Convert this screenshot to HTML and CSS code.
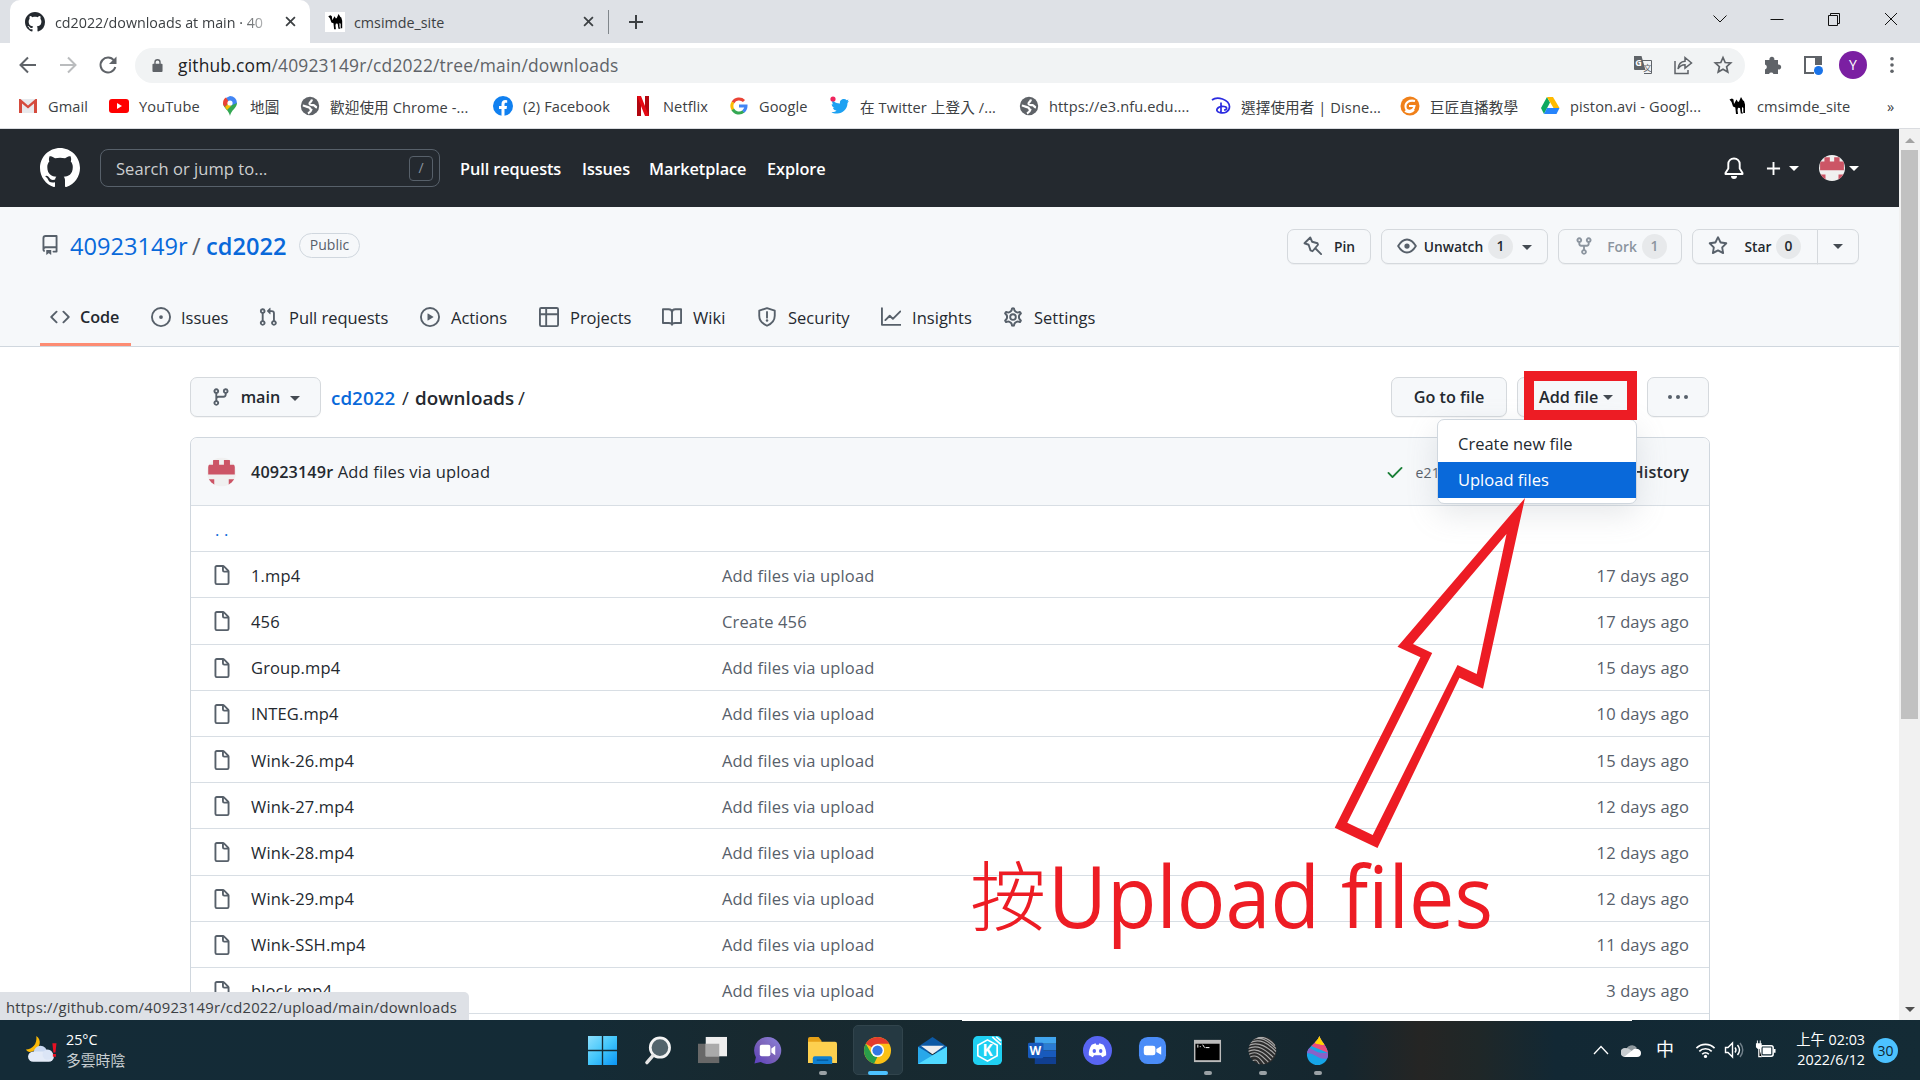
FILE: index.html
```html
<!DOCTYPE html>
<html lang="zh-Hant">
<head>
<meta charset="utf-8">
<title>cd2022/downloads at main · 40923149r/cd2022</title>
<link rel="stylesheet" href="styles.css">
</head>
<body>
<svg class="defs" aria-hidden="true">
  <symbol id="i-github" viewBox="0 0 16 16"><path d="M8 0C3.58 0 0 3.58 0 8c0 3.54 2.29 6.53 5.47 7.59.4.07.55-.17.55-.38 0-.19-.01-.82-.01-1.49-2.01.37-2.53-.49-2.69-.94-.09-.23-.48-.94-.82-1.13-.28-.15-.68-.52-.01-.53.63-.01 1.08.58 1.23.82.72 1.21 1.87.87 2.33.66.07-.52.28-.87.51-1.07-1.78-.2-3.64-.89-3.64-3.95 0-.87.31-1.59.82-2.15-.08-.2-.36-1.02.08-2.12 0 0 .67-.21 2.2.82.64-.18 1.32-.27 2-.27.68 0 1.36.09 2 .27 1.53-1.04 2.2-.82 2.2-.82.44 1.1.16 1.92.08 2.12.51.56.82 1.27.82 2.15 0 3.07-1.87 3.75-3.65 3.95.29.25.54.73.54 1.48 0 1.07-.01 1.93-.01 2.2 0 .21.15.46.55.38A8.013 8.013 0 0016 8c0-4.42-3.58-8-8-8z"/></symbol>
  <symbol id="i-file" viewBox="0 0 16 16"><path fill-rule="evenodd" d="M3.750 1.500a.25.25 0 00-.25.25v12.500c0 .138.112.25.25.25h8.500a.25.25 0 00.25-.25V6H9.750A1.750 1.750 0 018 4.250V1.500H3.750zm5.750.560v2.190c0 .138.112.25.25.25h2.190L9.500 2.060zM2 1.750C2 .784 2.784 0 3.750 0h5.086c.464 0 .909.184 1.237.513l3.414 3.414c.329.328.513.773.513 1.237v9.086A1.750 1.750 0 0112.250 16h-8.500A1.750 1.750 0 012 14.250V1.750z"/></symbol>
  <symbol id="i-camel" viewBox="0 0 20 20"><path d="M2.500 3.500L5 2.500l1.500 1L7 8l2.500-4.500L11 6l1-.5 2-4.500 2 3.500 1 .5 1 3.500v8.500h-1.700v-5l-1.300-1v4.500l1 2h-2.200l-.8-5.500-2-.3-.5 2.300.5 4H9l-.7-6.500L6 10.500 4.500 6z"/></symbol>
  <symbol id="i-globe" viewBox="0 0 20 20"><circle cx="10" cy="10" r="9.200" fill="#5f6368"/><path fill="none" stroke="#fff" stroke-width="2.200" d="M2.800 9.500c2 .3 3.500 1.500 6 1.800 1.500.2 1 2 2.500 2.500-.3 1.700-1.500 2.700-3.300 3.600M17 11.500c-1.500-.3-2-2-3.500-2.300-1.800-.3-3.500.3-4-1.200-.4-1.500 2-2 2.500-4.500"/></symbol>
  <symbol id="i-avatar" viewBox="0 0 24 24"><clipPath id="round"><circle cx="12" cy="12" r="12"/></clipPath><g clip-path="url(#round)"><path fill="#f0f0f0" d="M0 0h24v24H0z"/><path fill="#cc5566" d="M1 6h4V2h5v4h4V2h5v4h4v8H1zM1 18h5v6H1zM18 18h5v6h-5z"/></g></symbol>
</svg>

<header class="tabstrip">
  <div class="tab tab-active">
    <svg class="ic20 dark"><use href="#i-github"/></svg>
    <span class="tab-title fade">cd2022/downloads at main · 40</span>
    <svg class="x" viewBox="0 0 10 10"><path d="M1 1l8 8M9 1l-8 8"/></svg>
  </div>
  <div class="tab tab-idle">
    <span class="favicon"><svg class="ic18"><use href="#i-camel"/></svg></span>
    <span class="tab-title">cmsimde_site</span>
    <svg class="x" viewBox="0 0 10 10"><path d="M1 1l8 8M9 1l-8 8"/></svg>
  </div>
  <svg class="newtab" viewBox="0 0 16 16"><path d="M8 1v14M1 8h14"/></svg>
  <div class="window-controls">
    <svg viewBox="0 0 16 16"><path d="M1.500 4.500L8 11l6.500-6.500"/></svg>
    <svg viewBox="0 0 16 16"><path d="M1.500 8.500h13"/></svg>
    <svg viewBox="0 0 16 16"><path d="M2.500 4.500h9v10h-9zM4.500 4V2.500h9v10H12"/></svg>
    <svg viewBox="0 0 16 16"><path d="M2 2l12 12M14 2L2 14"/></svg>
  </div>
</header>

<div class="toolbar">
  <div class="nav-buttons">
    <svg viewBox="0 0 20 20"><path d="M18 10H3M10 2.500L2.500 10l7.500 7.500"/></svg>
    <svg class="off" viewBox="0 0 20 20"><path d="M2 10h15M10 2.500l7.500 7.500-7.500 7.500"/></svg>
    <svg viewBox="0 0 20 20"><path d="M16 5.500A7.500 7.500 0 1 0 17.300 12"/><path class="solid" d="M18.500 1.500V9H11z"/></svg>
  </div>
  <div class="omnibox">
    <svg class="lock" viewBox="0 0 12 16"><path fill-rule="evenodd" d="M1.500 6H2.500V4.500a3.500 3.500 0 0 1 7 0V6h1a1 1 0 0 1 1 1v7a1 1 0 0 1-1 1h-9a1 1 0 0 1-1-1V7a1 1 0 0 1 1-1zM4 6h4V4.500a2 2 0 0 0-4 0z"/></svg>
    <span class="url"><b>github.com</b>/40923149r/cd2022/tree/main/downloads</span>
    <div class="omni-actions">
      <svg viewBox="0 0 20 20"><path fill="none" stroke="#5f6368" d="M8 5.500h10.500v13H11"/><path d="M1 1h7.500l4 14H1.500L1 14z"/><text x="2.300" y="11" font-size="9" fill="#fff" font-weight="700">G</text><text x="10.200" y="16" font-size="8.500" fill="#5f6368">文</text></svg>
      <svg viewBox="0 0 20 20"><path fill="none" stroke="#5f6368" stroke-width="1.500" d="M2 6v12.500h13V15M5 14c.5-5 3-7.500 7-7.700V2.500L18.500 8 12 13.200v-3.500c-3 0-5.500 1.500-7 4.300z"/></svg>
      <svg viewBox="0 0 20 20"><path fill="none" stroke="#5f6368" stroke-width="1.700" d="M10 2.500l2.200 5 5.500.5-4.100 3.700 1.200 5.400L10 14.300l-4.800 2.800 1.200-5.400L2.300 8l5.500-.5z"/></svg>
    </div>
  </div>
  <div class="ext">
    <svg viewBox="0 0 20 20"><path d="M2 5h4.500a2.500 2.500 0 1 1 4.800 0H15v4.500a2.500 2.500 0 1 1 0 4.800V19h-4.500a2.500 2.500 0 0 0-4.500 0H2v-4.500a2.600 2.600 0 0 0 0-5z"/></svg>
    <svg viewBox="0 0 20 20"><path fill="none" stroke="#5f6368" stroke-width="2" d="M18 10V2H2v16h9"/><path d="M12 2h6v8h-6z"/><circle cx="15.500" cy="15.500" r="4.500" fill="#1a73e8"/></svg>
    <span class="profile">Y</span>
    <svg class="dots" viewBox="0 0 6 20"><circle cx="3" cy="3" r="2"/><circle cx="3" cy="10" r="2"/><circle cx="3" cy="17" r="2"/></svg>
  </div>
</div>

<nav class="bookmarks">
  <a><svg viewBox="0 0 20 20"><path fill="#e8eaed" d="M1 3h18v14H1z"/><path fill="#d54b3d" d="M1 17V3h1.500L10 9.500 17.500 3H19v14h-3V7.500l-6 5-6-5V17z"/></svg>Gmail</a>
  <a><svg viewBox="0 0 20 20"><rect y="3" width="20" height="14" rx="3" fill="#f00"/><path fill="#fff" d="M8 7l5 3-5 3z"/></svg>YouTube</a>
  <a><svg viewBox="0 0 20 20"><path fill="#34a853" d="M10 20C9 14 3 12 3 7h14c0 5-6 7-7 13z"/><path fill="#4285f4" d="M10 0a7 7 0 0 1 7 7l-7 3L6 2z"/><path fill="#ea4335" d="M3 7c0-3 1.500-4.500 3-5.500L9 6 5 11C4 10 3 9 3 7z"/><path fill="#fbbc04" d="M5 11l4-4 2 3-4 4z"/><circle cx="10" cy="7" r="2.600" fill="#fff"/></svg><span class="cjk">地圖</span></a>
  <a><svg><use href="#i-globe"/></svg>歡迎使用 Chrome -...</a>
  <a><svg viewBox="0 0 20 20"><circle cx="10" cy="10" r="10" fill="#1080f0"/><path fill="#fff" d="M8.500 20v-7H6v-3h2.500V8c0-2.600 1.500-4 3.800-4l1.900.2v2.500H13c-1.200 0-1.500.7-1.500 1.500V10H14l-.4 3h-2.100v7z"/></svg>(2) Facebook</a>
  <a><svg viewBox="0 0 20 20"><path fill="#b1060f" d="M4 0h4v20H4zM12 0h4v20h-4z"/><path fill="#e50914" d="M4 0h4l8 20h-4z"/></svg>Netflix</a>
  <a><svg viewBox="0 0 20 20" fill="none" stroke-width="3"><path stroke="#ea4335" d="M4 6.500A7 7 0 0 1 15 5"/><path stroke="#fbbc05" d="M4 6.300a7 7 0 0 0 0 7.400"/><path stroke="#34a853" d="M3.800 13.500A7 7 0 0 0 14.500 15.400"/><path stroke="#4285f4" d="M10 10h7a7 7 0 0 1-2.800 5.600"/></svg>Google</a>
  <a><svg viewBox="0 0 20 20"><path fill="#1da1f2" d="M1.500 16c2 .2 4-.3 5-1.500-2 0-3-1-3.500-2.500h1.500C3 11.500 1.700 10 1.700 8l1.600.5C2 7 2 5.500 2.500 4c2 2.500 4.500 3.500 7.500 3.500-.5-3 1.500-4.500 4-4.500 1 0 2 .4 2.700 1.200L18.500 3.500 17.500 5.500l1.500-.5L17.500 7C17.500 13.500 12 18 6.500 17.500c-2 0-4-.5-5-1.500z"/><circle cx="3" cy="3" r="2.600" fill="#f0245c"/></svg>在 Twitter 上登入 /...</a>
  <a><svg><use href="#i-globe"/></svg>https://e3.nfu.edu....</a>
  <a><svg viewBox="0 0 20 20" fill="none" stroke="#2b2be0" stroke-width="1.700"><path d="M1 4c5-4 17-1 17.500 6.500.2 5-5 7.500-10 6S6 10 13 10.500c4 .5 3 3.500 0 3.500M10 6.500V17"/></svg>選擇使用者 | Disne...</a>
  <a><svg viewBox="0 0 20 20"><circle cx="10" cy="10" r="9.500" fill="#f08019"/><path fill="none" stroke="#fff" stroke-width="2" d="M15 5C9 3.500 5 7 5.500 11c.5 5 8 5 9-1H9M5 15c3 2 7 1.500 9-1"/></svg><span class="cjk">巨匠直播教學</span></a>
  <a><svg viewBox="0 0 20 20"><path fill="#0da960" d="M7 1l3 5.500L4 18l-3-6z"/><path fill="#ffba00" d="M7 1h6l6.500 11h-6z"/><path fill="#2684fc" d="M4 18l3-6h12.500l-3 6z"/></svg>piston.avi - Googl...</a>
  <a><svg><use href="#i-camel"/></svg>cmsimde_site</a>
  <a class="more">»</a>
</nav>

<main class="viewport">
  <div class="page">
    <header class="gh-header">
      <svg class="gh-logo"><use href="#i-github"/></svg>
      <div class="gh-search"><span>Search or jump to...</span><kbd>/</kbd></div>
      <nav class="gh-nav"><a>Pull requests</a><a>Issues</a><a>Marketplace</a><a>Explore</a></nav>
      <div class="gh-user">
        <svg class="bell" viewBox="0 0 20 22"><path fill="none" stroke="#fff" stroke-width="1.900" stroke-linejoin="round" d="M10 1.500c-3.500 0-5.700 2.500-5.700 5.500v4.500L1.500 16v1h17v-1l-2.800-4.500V7c0-3-2.200-5.500-5.700-5.500z"/><path fill="#fff" d="M7 19h6a3 3 0 0 1-6 0z"/></svg>
        <svg class="plus" viewBox="0 0 16 16"><path stroke="#fff" stroke-width="2" d="M8 1v14M1 8h14"/></svg>
        <i class="caret"></i>
        <svg class="me"><use href="#i-avatar"/></svg>
        <i class="caret"></i>
      </div>
    </header>

    <section class="repohead">
      <div class="repo-row">
        <svg class="ic20 repo-ic" viewBox="0 0 16 16"><path fill-rule="evenodd" d="M2 2.500A2.500 2.500 0 014.500 0h8.750a.75.75 0 01.75.75v12.500a.75.75 0 01-.75.75h-2.500a.75.75 0 110-1.500h1.750v-2h-8a1 1 0 00-.714 1.700.75.75 0 01-1.072 1.050A2.495 2.495 0 012 11.500v-9zm10.500-1V9h-8c-.356 0-.694.074-1 .208V2.500a1 1 0 011-1h8zM5 12.250v3.250a.25.25 0 00.4.2l1.450-1.087a.25.25 0 01.3 0L8.600 15.700a.25.25 0 00.4-.2v-3.250a.25.25 0 00-.25-.25h-3.500a.25.25 0 00-.25.25z"/></svg>
        <h1><a class="owner">40923149r</a><span>/</span><a class="repo">cd2022</a></h1>
        <span class="pill">Public</span>
        <div class="repo-actions">
          <button class="sm pin"><svg class="ic20" viewBox="0 0 16 16"><path class="line" d="M1.200 5.800L5.800 1.200l1.500 3.400 4.300 1.200.4 1.200L7.600 12.200l-1.600-.7L4.500 7zM10 10l4.500 4.500"/></svg><span>Pin</span></button>
          <button class="sm unwatch"><svg class="ic20" viewBox="0 0 16 16"><path class="line" d="M.9 8C3 4.500 5.300 2.800 8 2.800S13 4.500 15.100 8C13 11.500 10.700 13.200 8 13.200S3 11.500.9 8z"/><circle cx="8" cy="8" r="2.100"/></svg><span>Unwatch</span><em>1</em><i class="caret"></i></button>
          <button class="sm fork"><svg class="ic20" viewBox="0 0 16 16"><path fill-rule="evenodd" d="M5 3.250a.75.75 0 11-1.500 0 .75.75 0 011.500 0zm0 2.122a2.250 2.250 0 10-1.500 0v.878A2.250 2.250 0 005.750 8.500h1.500v2.128a2.251 2.251 0 101.500 0V8.500h1.500a2.250 2.250 0 002.250-2.250v-.878a2.250 2.250 0 10-1.500 0v.878a.75.75 0 01-.75.75h-4.500A.75.75 0 015 6.250v-.878zm3.750 7.378a.75.75 0 11-1.500 0 .75.75 0 011.500 0zm3-8.750a.75.75 0 100-1.500.75.75 0 000 1.500z"/></svg><span>Fork</span><em>1</em></button>
          <div class="split"><button class="sm star"><svg class="ic20" viewBox="0 0 16 16"><path fill-rule="evenodd" d="M8 .25a.75.75 0 01.673.418l1.882 3.815 4.210.612a.75.75 0 01.416 1.279l-3.046 2.970.719 4.192a.75.75 0 01-1.088.791L8 12.347l-3.766 1.980a.75.75 0 01-1.088-.790l.72-4.194L.818 6.374a.75.75 0 01.416-1.280l4.210-.611L7.327.668A.75.75 0 018 .25zm0 2.445L6.615 5.500a.75.75 0 01-.564.410l-3.097.45 2.240 2.184a.75.75 0 01.216.664l-.528 3.084 2.769-1.456a.75.75 0 01.698 0l2.770 1.456-.53-3.084a.75.75 0 01.216-.664l2.240-2.183-3.096-.45a.75.75 0 01-.564-.410L8 2.694v.001z"/></svg><span>Star</span><em>0</em></button><button class="sm star-menu"><i class="caret"></i></button></div>
        </div>
      </div>
      <nav class="repo-tabs">
        <a class="on"><svg class="ic20" viewBox="0 0 16 16"><path d="M4.720 3.220a.75.75 0 011.060 1.060L2.060 8l3.720 3.720a.75.75 0 11-1.060 1.060L.470 8.530a.75.75 0 010-1.060l4.250-4.250zm6.560 0a.75.75 0 10-1.060 1.060L13.940 8l-3.720 3.720a.75.75 0 101.060 1.060l4.250-4.250a.75.75 0 000-1.060l-4.250-4.250z"/></svg>Code</a>
        <a><svg class="ic20" viewBox="0 0 16 16"><circle class="line" cx="8" cy="8" r="7.250"/><circle cx="8" cy="8" r="1.500"/></svg>Issues</a>
        <a><svg class="ic20" viewBox="0 0 16 16"><path fill-rule="evenodd" d="M7.177 3.073L9.573.677A.25.25 0 0110 .854v4.792a.25.25 0 01-.427.177L7.177 3.427a.25.25 0 010-.354zM3.750 2.500a.75.75 0 100 1.500.75.75 0 000-1.500zm-2.250.75a2.250 2.250 0 113 2.122v5.256a2.251 2.251 0 11-1.500 0V5.372A2.250 2.250 0 011.500 3.250zM11 2.500h-1V4h1a1 1 0 011 1v5.628a2.251 2.251 0 101.500 0V5A2.500 2.500 0 0011 2.500zm1 10.250a.75.75 0 111.500 0 .75.75 0 01-1.500 0zM3.750 12a.75.75 0 100 1.500.75.75 0 000-1.500z"/></svg>Pull requests</a>
        <a><svg class="ic20" viewBox="0 0 16 16"><circle class="line" cx="8" cy="8" r="7.250"/><path d="M6.379 5.227A.25.25 0 006 5.442v5.117a.25.25 0 00.379.214l4.264-2.559a.25.25 0 000-.428L6.379 5.227z"/></svg>Actions</a>
        <a><svg class="ic20" viewBox="0 0 16 16"><rect class="line" x=".75" y=".75" width="14.500" height="14.500" rx="1"/><path class="line" d="M1 5.750h14M5.750 1v14"/></svg>Projects</a>
        <a><svg class="ic20" viewBox="0 0 16 16"><path class="line" d="M.75 1.750h4.500c1.500 0 2.750 1 2.750 2.500v10c0-1-1.200-1.500-2.500-1.500H.75zM15.250 1.750h-4.500C9.200 1.750 8 2.750 8 4.250v10c0-1 1.200-1.500 2.500-1.500h4.750z"/></svg>Wiki</a>
        <a><svg class="ic20" viewBox="0 0 16 16"><path class="line" d="M8 .9l6.200 2V7c0 3.500-2.200 6.300-6.200 8-4-1.700-6.200-4.500-6.200-8V2.900z"/><path class="line" d="M8 4v4.500"/><circle cx="8" cy="10.800" r="1"/></svg>Security</a>
        <a><svg class="ic20" viewBox="0 0 16 16"><path class="line" d="M.75 1v13.250H16M3.500 10.500L7 7l2.500 2.500 6-6"/></svg>Insights</a>
        <a><svg class="ic20" viewBox="0 0 16 16"><path class="line" transform="translate(-.5 -.5) scale(1.063)" d="M7.429 1.525a6.593 6.593 0 011.142 0c.036.003.108.036.137.146l.289 1.105c.147.56.55.967.997 1.189.174.086.341.183.501.29.417.278.97.423 1.530.27l1.102-.303c.11-.03.175.016.195.046.219.31.41.641.573.989.014.031.022.11-.059.19l-.815.806c-.411.406-.562.957-.53 1.456a4.588 4.588 0 010 .582c-.032.499.119 1.050.53 1.456l.815.806c.08.08.073.159.059.19a6.494 6.494 0 01-.573.99c-.02.029-.086.074-.195.045l-1.103-.303c-.559-.153-1.112-.008-1.529.27-.16.107-.327.204-.5.29-.449.222-.851.628-.998 1.189l-.289 1.105c-.029.11-.101.143-.137.146a6.613 6.613 0 01-1.142 0c-.036-.003-.108-.037-.137-.146l-.289-1.105c-.147-.56-.55-.967-.997-1.189a4.502 4.502 0 01-.501-.29c-.417-.278-.97-.423-1.530-.27l-1.102.303c-.11.03-.175-.016-.195-.046a6.492 6.492 0 01-.573-.989c-.014-.031-.022-.11.059-.19l.815-.806c.411-.406.562-.957.53-1.456a4.587 4.587 0 010-.582c.032-.499-.119-1.050-.53-1.456l-.815-.806c-.08-.08-.073-.159-.059-.19a6.440 6.440 0 01.573-.99c.02-.029.086-.075.195-.045l1.103.303c.559.153 1.112.008 1.529-.27.16-.107.327-.204.5-.29.449-.222.851-.628.998-1.189l.289-1.105c.029-.11.101-.143.137-.146z"/><circle class="line" cx="8" cy="8" r="2.250"/></svg>Settings</a>
      </nav>
    </section>

    <section class="content">
      <div class="file-nav">
        <button class="md branch"><svg class="ic20" viewBox="0 0 16 16"><path fill-rule="evenodd" d="M11.750 2.500a.75.75 0 100 1.500.75.75 0 000-1.500zm-2.250.75a2.250 2.250 0 113 2.122V6A2.500 2.500 0 0110 8.500H6a1 1 0 00-1 1v1.128a2.251 2.251 0 11-1.500 0V5.372a2.250 2.250 0 111.500 0v1.836A2.492 2.492 0 016 7h4a1 1 0 001-1v-.628A2.250 2.250 0 019.500 3.250zM4.250 12a.75.75 0 100 1.500.75.75 0 000-1.500zM3.500 3.250a.75.75 0 111.500 0 .75.75 0 01-1.500 0z"/></svg><span>main</span><i class="caret"></i></button>
        <div class="crumbs"><a>cd2022</a><span>/</span><b>downloads</b><span>/</span></div>
        <div class="file-actions">
          <button class="md goto">Go to file</button>
          <div class="add-wrap">
            <button class="md add">Add file<i class="caret"></i></button>
            <div class="menu"><a>Create new file</a><a class="sel">Upload files</a></div>
          </div>
          <button class="md kebab"><svg viewBox="0 0 22 6"><circle cx="3" cy="3" r="2"/><circle cx="11" cy="3" r="2"/><circle cx="19" cy="3" r="2"/></svg></button>
        </div>
      </div>
      <div class="box">
        <div class="commit">
          <svg class="avatar"><use href="#i-avatar"/></svg>
          <p><b>40923149r</b> Add files via upload</p>
          <div class="commit-meta">
            <svg class="ic20 check" viewBox="0 0 16 16"><path d="M13.780 4.220a.75.75 0 010 1.060l-7.250 7.250a.75.75 0 01-1.060 0L2.220 9.280a.75.75 0 011.060-1.060L6 10.940l6.720-6.720a.75.75 0 011.060 0z"/></svg>
            <span class="sha">e21</span><b class="history">History</b>
          </div>
        </div>
        <div class="row"><span class="up">. .</span></div>
        <div class="row"><svg class="ic20"><use href="#i-file"/></svg><a>1.mp4</a><span>Add files via upload</span><time>17 days ago</time></div>
        <div class="row"><svg class="ic20"><use href="#i-file"/></svg><a>456</a><span>Create 456</span><time>17 days ago</time></div>
        <div class="row"><svg class="ic20"><use href="#i-file"/></svg><a>Group.mp4</a><span>Add files via upload</span><time>15 days ago</time></div>
        <div class="row"><svg class="ic20"><use href="#i-file"/></svg><a>INTEG.mp4</a><span>Add files via upload</span><time>10 days ago</time></div>
        <div class="row"><svg class="ic20"><use href="#i-file"/></svg><a>Wink-26.mp4</a><span>Add files via upload</span><time>15 days ago</time></div>
        <div class="row"><svg class="ic20"><use href="#i-file"/></svg><a>Wink-27.mp4</a><span>Add files via upload</span><time>12 days ago</time></div>
        <div class="row"><svg class="ic20"><use href="#i-file"/></svg><a>Wink-28.mp4</a><span>Add files via upload</span><time>12 days ago</time></div>
        <div class="row"><svg class="ic20"><use href="#i-file"/></svg><a>Wink-29.mp4</a><span>Add files via upload</span><time>12 days ago</time></div>
        <div class="row"><svg class="ic20"><use href="#i-file"/></svg><a>Wink-SSH.mp4</a><span>Add files via upload</span><time>11 days ago</time></div>
        <div class="row"><svg class="ic20"><use href="#i-file"/></svg><a>block.mp4</a><span>Add files via upload</span><time>3 days ago</time></div>
        <div class="row"></div>
      </div>
    </section>
  </div>
  <div class="scrollbar"><i class="up-arrow"></i><div class="thumb"></div><i class="down-arrow"></i></div>
  <div class="status">https://github.com/40923149r/cd2022/upload/main/downloads</div>
</main>

<footer class="taskbar">
  <div class="weather">
    <svg viewBox="0 0 30 28"><path fill="#f9b806" d="M10 0c5 3 5 12-4 15-3 1-5 0-6-2 6 0 11-5 10-13z"/><circle cx="14" cy="16" r="6.500" fill="#c9d8f0"/><rect x="2" y="15" width="25" height="10" rx="5" fill="#e4ebf8"/><circle cx="21" cy="18" r="5" fill="#dbe5f6"/><path fill="#e81123" d="M25.500 7h4l-1 9h-2zM26 17.500h3v2.500h-3z"/></svg>
    <p>25°C<br><span>多雲時陰</span></p>
  </div>
  <div class="apps">
    <a><svg viewBox="0 0 30 30"><defs><linearGradient id="win" x2="1" y2="1"><stop stop-color="#8de0fd"/><stop offset=".5" stop-color="#42c6fb"/><stop offset="1" stop-color="#0a94f5"/></linearGradient></defs><path fill="url(#win)" d="M0 0h14.300v14.300H0zM15.700 0H30v14.300H15.700zM0 15.700h14.300V30H0zM15.700 15.700H30V30H15.700z"/></svg></a>
    <a><svg viewBox="0 0 30 30"><circle cx="17.500" cy="12" r="10" fill="#53646c" stroke="#f4f4f4" stroke-width="2.800"/><path stroke="#e5e5e5" stroke-width="3.500" stroke-linecap="round" d="M10.500 20L4 27.500"/></svg></a>
    <a><svg viewBox="0 0 30 30"><path fill="#686868" d="M0 8h22v20H0z"/><path fill="#eee" d="M8 1h22v20H8z"/><path fill="#aaa" d="M8 8h14v13H8z"/></svg></a>
    <a><svg viewBox="0 0 30 30"><defs><linearGradient id="chat" x1="1" x2="0" y2="1"><stop stop-color="#8b83e0"/><stop offset=".5" stop-color="#7b63b8"/><stop offset="1" stop-color="#5b3fc0"/></linearGradient></defs><path fill="url(#chat)" d="M15 1a14 14 0 1 1-7 26l-6.500 1.500L3 22A14 14 0 0 1 15 1z"/><rect x="7" y="9" width="11" height="12" rx="2" fill="#fff"/><path fill="#fff" d="M19 13l4-3v10l-4-3z"/></svg></a>
    <a class="open"><svg viewBox="0 0 30 30"><path fill="#e6a117" d="M0 3q0-2 2-2h9l3 4v8H0z"/><path fill="#fdd04f" d="M0 6h28q2 0 2 2v20H0z"/><path fill="#0f7fd0" d="M5 29v-6q0-2 2-2h16q2 0 2 2v6z"/><path stroke="#065a9e" stroke-width="1.500" d="M9 25h12"/></svg></a>
    <a class="current"><svg viewBox="0 0 30 30"><circle cx="15" cy="15" r="14" fill="#fbc116"/><path fill="#e33b2e" d="M15 15L2.900 8A14 14 0 0 1 27.100 8H15z"/><path fill="#2a9d4a" d="M2.900 8L9 18.500l6 3-3.500 7A14 14 0 0 1 2.900 8z"/><circle cx="15" cy="15" r="6.800" fill="#fff"/><circle cx="15" cy="15" r="5.300" fill="#3478e5"/></svg></a>
    <a><svg viewBox="0 0 30 30"><path fill="#0c59a4" d="M15 1l15 10v6H0v-6z"/><path fill="#28a8ea" d="M0 11l15 9 15-9v16q0 2-2 2H0z"/><path fill="#50d9ff" d="M0 29l30-18v16q0 2-2 2z"/><path fill="#eee" d="M3 10h24l-12 9z"/></svg></a>
    <a><svg viewBox="0 0 30 30"><rect width="30" height="30" rx="5" fill="#1fd0f2"/><path fill="none" stroke="#fff" stroke-width="1.700" d="M15 4l10 5.500v11L15 26 5 20.500v-11zM20 1l9 8M24 1l5 4"/><text x="9.800" y="20.500" font-size="16" font-weight="700" fill="#fff">K</text></svg></a>
    <a><svg viewBox="0 0 30 30"><path fill="#41a5ee" d="M7 1h22v7H7z"/><path fill="#2b7cd3" d="M7 8h22v7H7z"/><path fill="#185abd" d="M7 15h22v7H7z"/><path fill="#103f91" d="M7 22h22v7H7z"/><rect y="7" width="16" height="16" rx="1.500" fill="#185abd"/><text x="1.500" y="19.500" font-size="12.500" font-weight="700" fill="#fff">W</text></svg></a>
    <a><svg viewBox="0 0 30 30"><circle cx="15" cy="15" r="15" fill="#5865f2"/><path fill="#fff" d="M9 9l4-1.500.7 1.500h2.600l.7-1.500L21 9c2 3 3.300 6.500 3 11l-4 2-1.500-2h-7L10 22l-4-2c-.3-4.500 1-8 3-11z"/><ellipse cx="11.700" cy="15.500" rx="1.800" ry="2" fill="#5865f2"/><ellipse cx="18.300" cy="15.500" rx="1.800" ry="2" fill="#5865f2"/></svg></a>
    <a><svg viewBox="0 0 30 30"><rect x="1" y="1" width="28" height="28" rx="9" fill="#4a8cf7"/><rect x="6" y="10" width="12" height="10" rx="2.500" fill="#fff"/><path fill="#fff" d="M19 13.500l5-3v9l-5-3z"/></svg></a>
    <a class="open"><svg viewBox="0 0 30 30"><path fill="#bbb" d="M1 4h28v23H1z"/><path fill="#000" d="M2.500 8h25v17h-25z"/><path fill="none" stroke="#fff" d="M5 9v3M7 11h1M10 9l2 3M13 12h4"/></svg></a>
    <a class="open"><svg viewBox="0 0 30 30"><defs><clipPath id="ball"><circle cx="15" cy="15" r="14.500"/></clipPath></defs><g clip-path="url(#ball)"><circle cx="15" cy="15" r="15" fill="#2c2c2c"/><path fill="none" stroke="#aaa" stroke-width="1.200" d="M4 4c9-4 16 0 25 9M2 7c10-5 18 0 27 9M0 10c10-5 19 0 28 9M0 13c10-5 18 1 26 9M0 16c9-5 17 1 24 9M1 19c8-5 14 2 20 8M2 22c7-4 11 2 15 7M4 26c5-3 6 0 8 4M9 2c7-2 13 1 19 8"/></g></svg></a>
    <a class="open"><svg viewBox="0 0 30 30"><defs><clipPath id="drop"><path d="M17 0c1 5 9 11 9 19a11 11 0 0 1-22 0C4 11 14 8 17 0z"/></clipPath></defs><g clip-path="url(#drop)"><path fill="#16a5e8" d="M0 0h30v30H0z"/><path fill="#e94b7c" d="M0 0h30v19L8 10z"/><path fill="#8a62c8" d="M4 12c6 0 10 8 22 5v6C16 26 12 17 4 18z"/><path fill="#ffd400" d="M10 0h12v9c-4 1-5-1-9-1z"/></g></svg></a>
  </div>
  <div class="tray">
    <svg class="up" viewBox="0 0 16 10"><path fill="none" stroke="#fff" stroke-width="1.300" d="M1 9l7-7.500L15 9"/></svg>
    <svg class="cloud" viewBox="0 0 20 16"><path fill="#8f989d" d="M5 9a6 6 0 0 1 11-3l-6 5z"/><path fill="#c8cdd0" d="M4 15a4 4 0 0 1 0-9c4 0 6 2 9 5z"/><path fill="#fff" d="M3 15l10-8c4-1 7 1 7 4a4 4 0 0 1-4 4z"/></svg>
    <span class="ime">中</span>
    <svg class="wifi" viewBox="0 0 22 18"><path fill="none" stroke="#fff" stroke-width="1.700" d="M1.500 7a13.500 13.500 0 0 1 19 0M4.500 10.500a9 9 0 0 1 13 0M7.500 13.500a5 5 0 0 1 7 0"/><circle cx="11" cy="15.700" r="1.700" fill="#fff"/></svg>
    <svg class="sound" viewBox="0 0 22 18"><path fill="none" stroke="#fff" stroke-width="1.400" d="M1.500 6.500H4L8.500 2v14L4 11.500H1.500zM11 6.500q2 2.500 0 5M13.500 4q4 5 0 10"/><path fill="none" stroke="#71808a" stroke-width="1.400" d="M16 2q5.500 7 0 14"/></svg>
    <svg class="batt" viewBox="0 0 22 20"><rect x="6" y="5.500" width="13" height="11" rx="2" fill="none" stroke="#fff" stroke-width="1.600"/><path fill="#fff" d="M8 7.500h9v7H8zM19.500 9h2v4h-2zM1 3h6v4l-2 2H3L1 7zM2 0h1v3H2zM5 0h1v3H5z"/><path stroke="#fff" stroke-width="1.300" d="M4 8v9h3"/></svg>
    <p class="clock">上午 02:03<br>2022/6/12</p>
    <span class="badge">30</span>
  </div>
</footer>

<svg class="annotation" viewBox="0 0 1920 1080">
  <rect x="1529" y="376" width="103" height="39" fill="none" stroke="#ed1c24" stroke-width="10"/>
  <path fill="#ed1c24" fill-rule="evenodd" d="M1525 498L1397.500 646.700 1420.400 657.300 1334.700 827.700 1377.500 848 1459.500 677.700 1483 688.700zM1506.500 534L1413 644 1432.200 653 1347.300 822.700 1372.700 835 1457.500 665 1476.700 674z"/>
  <text x="970" y="925" class="note-cjk">按</text>
  <text x="1048" y="928" class="note" textLength="445" lengthAdjust="spacingAndGlyphs">Upload files</text>
</svg>
</body>
</html>
```
FILE: styles.css
```css
* { box-sizing: border-box; }

body {
  margin: 0;
  width: 1920px;
  height: 1080px;
  overflow: hidden;
  display: flex;
  flex-direction: column;
  position: relative;
  background: #fff;
  font-family: "Open Sans", "Noto Sans CJK TC", sans-serif;
  font-size: 16.5px;
  color: #24292f;
  white-space: nowrap;
}
p, h1 { margin: 0; }
svg { display: block; flex: none; }
i, em { font-style: normal; }
button { font: inherit; color: inherit; padding: 0; margin: 0; }
.defs { position: absolute; width: 0; height: 0; }
.ic20 { width: 20px; height: 20px; fill: #57606a; }
.ic18 { width: 18px; height: 18px; }
.dark { fill: #24292f; }
.line { fill: none; stroke: #57606a; stroke-width: 1.5; stroke-linecap: round; stroke-linejoin: round; }
.caret {
  flex: none;
  width: 0;
  height: 0;
  border: 5px solid transparent;
  border-top-color: currentColor;
  border-bottom: 0;
}

/* Browser tabs */
.tabstrip { height: 43px; flex: none; background: #dee1e6; display: flex; align-items: center; }
.tab { height: 43px; display: flex; align-items: center; font-size: 14.3px; color: #3c4043; }
.tab-active {
  width: 300px;
  margin-left: 10px;
  padding: 0 15px;
  background: #fff;
  border-radius: 10px 10px 0 0;
}
.tab-title { flex: none; width: 218px; margin-left: 10px; margin-right: 12px; padding-top: 1px; overflow: hidden; }
.fade { mask-image: linear-gradient(90deg, #000 85%, transparent 102%); }
.x { width: 11px; height: 11px; fill: none; stroke: #3c4043; stroke-width: 1.6; }
.tab-idle { width: 299px; padding-left: 15px; border-right: 1px solid #80868b; height: 24px; }
.favicon { background: #fff; width: 20px; padding: 1px; }
.favicon + .tab-title { width: 228px; margin-left: 9px; margin-right: 1px; }
.newtab { width: 16px; height: 16px; margin-left: 19px; fill: none; stroke: #3c4043; stroke-width: 2; }
.window-controls { margin-left: auto; display: flex; gap: 41px; padding-right: 21px; padding-bottom: 6px; }
.window-controls svg { width: 16px; height: 16px; fill: none; stroke: #111; }

/* Address bar */
.toolbar { height: 45px; flex: none; display: flex; align-items: center; padding: 0 0 1px 18px; }
.nav-buttons { display: flex; gap: 20px; width: 117px; }
.nav-buttons svg { width: 20px; height: 20px; fill: none; stroke: #5f6368; stroke-width: 2; }
.nav-buttons .off { stroke: #babcbe; }
.nav-buttons .solid { fill: #5f6368; stroke: none; }
.omnibox { width: 1610px; height: 35px; border-radius: 18px; background: #f1f3f4; display: flex; align-items: center; padding: 0 12px 0 17px; }
.lock { width: 11px; height: 15px; fill: #5f6368; margin-right: 15px; }
.url { font-size: 17.4px; letter-spacing: .2px; color: #5f6368; }
.url b { font-weight: 400; color: #202124; }
.omni-actions { margin-left: auto; display: flex; gap: 20px; }
.omni-actions svg, .ext svg { width: 20px; height: 20px; fill: #5f6368; }
.ext { display: flex; align-items: center; margin-left: 18px; }
.ext svg + svg { margin-left: 20px; }
.profile { width: 28px; height: 28px; margin: 0 22px 0 16px; border-radius: 50%; background: #7b1fa2; color: #fff; font-size: 14px; line-height: 28px; text-align: center; }
.ext .dots { width: 6px; height: 18px; }

/* Bookmarks */
.bookmarks {
  height: 41px;
  flex: none;
  padding: 0 0 4px 18px;
  border-bottom: 1px solid #dadce0;
  display: grid;
  grid-template-columns: 91px 111px 80px 193px 140px 96px 101px 189px 192px 189px 140px 187px 160px 20px;
  align-items: center;
  font-size: 14.6px;
  letter-spacing: .1px;
  color: #3c4043;
}
.bookmarks a { display: flex; align-items: center; }
.bookmarks svg { width: 20px; height: 20px; margin-right: 10px; }

/* Page area */
.viewport { height: 891px; flex: none; display: flex; position: relative; overflow: hidden; }
.page { width: 1899px; flex: none; }
.gh-header { height: 78px; background: #24292f; color: #fff; display: flex; align-items: center; padding-left: 40px; }
.gh-logo { width: 40px; height: 40px; fill: #fff; }
.gh-search { width: 340px; height: 38px; margin-left: 20px; padding: 0 6px 0 15px; border: 1px solid #57606a; border-radius: 8px; display: flex; align-items: center; justify-content: space-between; color: #ccced0; letter-spacing: .06px; }
.gh-search kbd { width: 24px; height: 25px; border: 1px solid #57606a; border-radius: 4px; font: 14px/22px "Open Sans", sans-serif; text-align: center; color: #8b949e; }
.gh-nav { display: grid; grid-template-columns: 122px 67px 118px 70px; margin-left: 20px; padding-top: 1px; font-weight: 600; font-size: 16.3px; letter-spacing: -.08px; }
.gh-user { margin-left: auto; display: flex; align-items: center; padding-right: 40px; }
.bell { width: 20px; height: 22px; margin-right: 22px; }
.plus { width: 15px; height: 15px; margin-right: 8px; }
.me { width: 26px; height: 26px; margin: 0 4px 0 20px; }

.repohead { height: 140px; background: #f6f8fa; border-bottom: 1px solid #d0d7de; display: flex; flex-direction: column; justify-content: space-between; padding: 19px 40px 0 40px; }
.repo-row { display: flex; align-items: center; height: 40px; }
.repo-ic { margin-bottom: 3px; }
h1 { font-size: 23.6px; font-weight: 400; margin-left: 10px; display: grid; grid-template-columns: 122px 15px 92px; line-height: 32px; }
h1 a { color: #0969da; }
h1 span { color: #57606a; }
h1 .repo { font-weight: 600; margin-left: -1px; }
.pill { width: 61px; height: 25px; border: 1px solid #d0d7de; border-radius: 13px; font-size: 14px; line-height: 22px; text-align: center; color: #57606a; font-weight: 500; margin-bottom: 1px; }
.repo-actions { margin-left: auto; display: flex; gap: 10px; }
.sm, .md { background: #f6f8fa; border: 1px solid #d5d9dd; border-radius: 7px; display: flex; align-items: center; font-weight: 600; box-shadow: 0 1px 0 rgba(27, 31, 36, .04); }
.sm { height: 35px; font-size: 13.8px; padding-left: 15px; }
.sm .caret, .md .caret { color: #444b52; }
.pin { width: 84px; }
.pin span { margin-left: 11px; }
.unwatch { width: 167px; }
.unwatch span { margin-left: 2px; width: 69px; }
.sm em { width: 25px; height: 25px; border-radius: 13px; background: #e7e9eb; line-height: 24px; text-align: center; }
.unwatch .caret { margin-left: 9px; margin-top: 3px; }
.fork { width: 124px; color: #8c959f; }
.fork svg { fill: #8c959f; }
.fork span { margin-left: 8px; width: 40px; }
.split { display: flex; }
.star { width: 126px; border-radius: 7px 0 0 7px; }
.star span { margin-left: 12px; width: 36px; }
.star-menu { width: 42px; margin-left: -1px; border-radius: 0 7px 7px 0; }
.repo-tabs { display: grid; grid-template-columns: 101px 107px 162px 119px 123px 95px 124px 122px 110px; height: 60px; }
.repo-tabs a { height: 60px; display: flex; align-items: center; gap: 11px; padding: 2px 0 0 10px; letter-spacing: -.04px; }
.repo-tabs a:nth-child(2) { gap: 10px; }
.repo-tabs a:nth-child(n+6) { letter-spacing: .03px; }
.repo-tabs .on { width: 91px; border-bottom: 3px solid #fd8c73; padding-top: 5px; gap: 10px; font-weight: 600; font-size: 16.2px; }

/* Files */
.content { padding: 30px 189px 0 190px; }
.file-nav { height: 40px; display: flex; align-items: center; margin-bottom: 20px; }
.md { height: 40px; font-size: 16.2px; }
.branch { width: 131px; padding-left: 20px; }
.branch span { width: 49px; margin-left: 9px; }
.branch svg { margin-right: -4px; }
.branch .caret { margin-left: 5px; margin-top: 3px; }
.crumbs { display: grid; grid-template-columns: 71px 13px 103px 10px; margin-left: 10px; font-size: 18.8px; letter-spacing: .05px; padding-top: 1px; }
.crumbs a { color: #0969da; font-weight: 600; }
.crumbs b { font-weight: 600; }
.file-actions { margin-left: auto; margin-right: 1px; display: flex; gap: 10px; }
.goto { width: 116px; justify-content: center; }
.add-wrap { position: relative; }
.add { width: 120px; padding-left: 21px; gap: 5px; }
.kebab { width: 62px; justify-content: center; }
.kebab svg { width: 22px; height: 6px; fill: #57606a; }
.menu { position: absolute; z-index: 2; right: 0; top: 42px; width: 200px; height: 85px; background: #fff; border: 1px solid #d0d7de; border-radius: 7px; padding-top: 6px; box-shadow: 0 10px 30px rgba(140, 149, 159, .22); }
.menu a { display: block; height: 36px; line-height: 36px; padding-left: 20px; }
.menu .sel { background: #0969da; color: #fff; }
.box { border: 1px solid #d0d7de; border-radius: 7px 7px 0 0; letter-spacing: .14px; }
.commit { height: 67px; background: #f6f8fa; border-radius: 7px 7px 0 0; display: flex; align-items: center; padding: 0 20px 0 16px; }
.avatar { width: 29px; height: 30px; margin-right: 15px; }
.commit b { font-weight: 600; font-size: 16.2px; }
.commit-meta { margin-left: auto; display: flex; align-items: center; }
.check { fill: #1a7f37; }
.sha { font-size: 14px; color: #57606a; width: 216px; margin-left: 11px; padding-top: 2px; }
.row { height: 46.2px; border-top: 1px solid #d8dee4; display: grid; grid-template-columns: 40px 471px 1fr auto; align-items: center; padding: 1px 20px 0; }
.row svg { margin-left: 1px; }
.row span, .row time { color: #57606a; }
.row .up { color: #0969da; padding-left: 4px; }

.scrollbar { width: 21px; background: #f1f1f1; display: flex; flex-direction: column; align-items: center; }
.up-arrow { border: 5px solid transparent; border-bottom-color: #a3a3a3; margin-top: 4px; }
.thumb { width: 17px; height: 569px; background: #c1c1c1; margin-top: 7px; }
.down-arrow { border: 5px solid transparent; border-top-color: #505050; margin: auto 0 3px; }
.status { position: absolute; left: 0; bottom: 0; width: 469px; height: 28px; background: #dee1e6; border-radius: 0 5px 0 0; padding-left: 6px; font-size: 14.8px; letter-spacing: .24px; line-height: 31px; color: #3c4043; }

/* Taskbar */
.taskbar {
  height: 60px;
  flex: none;
  position: relative;
  display: flex;
  align-items: center;
  background: linear-gradient(90deg, #142b37 0, #142b36 30%, #18292f 40%, #162a32 60%, #15262e 70%, #252524 74%, #1f2728 77%, #122834 81%, #142b35 100%);
  color: #fff;
}
.taskbar::before { content: ""; position: absolute; left: 962px; top: 0; width: 670px; height: 1px; background: #fff; }
.weather { display: flex; align-items: center; width: 577.5px; padding-left: 26px; font-size: 14.3px; line-height: 20px; padding-top: 1px; }
.weather svg { width: 31px; height: 29px; margin-right: 9px; }
.weather span { color: #c8ced1; font-size: 14.8px; }
.apps { display: flex; gap: 5px; }
.apps a { width: 50px; height: 50px; display: flex; align-items: center; justify-content: center; position: relative; border-radius: 5px; }
.apps svg { width: 29px; height: 29px; }
.open::after, .current::after { content: ""; position: absolute; bottom: 0; left: 21px; width: 8px; height: 4px; border-radius: 2px; background: #9aa1a5; }
.current { background: #253942; border: 1px solid #31444c; }
.current::after { left: 14px; width: 20px; bottom: -1px; background: #4cc2ff; }
.tray { margin-left: auto; display: flex; align-items: center; padding-right: 22px; }
.tray .up { width: 16px; height: 10px; margin-right: 12px; }
.cloud { width: 20px; height: 16px; margin-right: 15px; }
.ime { font-size: 18px; line-height: 24px; width: 18px; margin-right: 21px; padding-bottom: 3px; }
.wifi { width: 21px; height: 18px; margin-right: 8px; }
.sound { width: 22px; height: 18px; margin-right: 9px; }
.batt { width: 21px; height: 20px; margin-right: 1px; }
.clock { width: 88px; text-align: right; font-size: 14.3px; line-height: 20px; }
.badge { width: 25px; height: 25px; margin-left: 8px; border-radius: 50%; background: #4cc2ff; color: #102530; font-size: 14px; line-height: 25px; text-align: center; }

.annotation { position: absolute; z-index: 5; left: 0; top: 0; width: 1920px; height: 1080px; }
.note, .note-cjk { fill: #ed1c24; font-size: 86px; }
.note-cjk { font-family: "Noto Sans CJK TC", sans-serif; font-weight: 300; font-size: 76px; }
```
